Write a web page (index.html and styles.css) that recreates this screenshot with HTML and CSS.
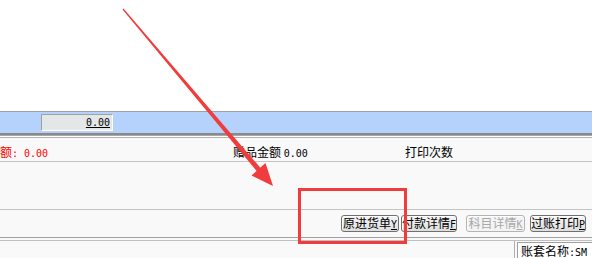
FILE: index.html
```html
<!DOCTYPE html>
<html lang="zh-CN">
<head>
  <meta charset="UTF-8" />
  <title>单据</title>
  <link rel="stylesheet" href="styles.css">
</head>
<body>
  <div class="top"></div>

  <div class="band">
    <div class="amount-box"><u>0.00</u></div>
  </div>
  <div class="sep"></div>

  <div class="info">
    <div class="info-item info-total">额<span class="num">: 0.00</span></div>
    <div class="info-item info-gift">赠品金额 <span class="num">0.00</span></div>
    <div class="info-item">打印次数</div>
  </div>

  <div class="panel"></div>

  <div class="actions">
    <button class="btn btn-orig">原进货单<u>Y</u></button>
    <button class="btn btn-pay">付款详情<u>F</u></button>
    <button class="btn btn-subj" disabled>科目详情<u>K</u></button>
    <button class="btn btn-post">过账打印<u>P</u></button>
  </div>
  <div class="actions-sep"></div>

  <div class="footer">
    <div class="footer-left"></div>
    <div class="footer-right">账套名称<span class="num">:SM</span></div>
  </div>

  <!-- annotation drawn over the window -->
  <svg class="markup" width="592" height="258" viewBox="0 0 592 258">
    <polygon points="122.5,9.5 123.5,8.5 260.9,168.4 257.1,171.6" fill="#f03c3c" />
    <polygon points="273,186 251.5,175.5 265.5,163" fill="#f03c3c" />
    <rect x="299.5" y="189.5" width="106" height="53" fill="none" stroke="#f03c3c" stroke-width="3" />
  </svg>
</body>
</html>
```

FILE: styles.css
```css
body {
  margin: 0;
  width: 592px;
  height: 258px;
  overflow: hidden;
  position: relative;
  background-color: #f9f9f9;
  font-family: "Noto Sans CJK SC", "DejaVu Sans", sans-serif;
  font-size: 12px;
  color: #000;
}

.top {
  height: 111px;
  background-color: #ffffff;
}

.band {
  height: 21px;
  border-top: 1px solid #a0a0a0;
  border-bottom: 2px solid #8a8a8a;
  background-color: #b4d2fc;
  padding-left: 41px;
}

.amount-box {
  margin-top: 2px;
  width: 72px;
  height: 17px;
  box-sizing: border-box;
  background-color: #e4e7e8;
  border-top: 1px solid #a0a0a0;
  border-left: 1px solid #a0a0a0;
  border-right: 1px solid #ffffff;
  border-bottom: 1px solid #ffffff;
  text-align: right;
  padding-right: 2px;
  line-height: 15px;
  font-family: "DejaVu Sans Mono", monospace;
  font-size: 10px;
}

.sep {
  height: 1px;
  background-color: #ffffff;
  border-top: 1px solid #a8a8a8;
  border-bottom: 1px solid #b4b4b4;
}

.info {
  display: flex;
  height: 18px;
  padding-top: 5px;
  line-height: 18px;
  border-bottom: 1px solid #c4c4c4;
  white-space: nowrap;
}

.info-item {
  flex: 0 0 auto;
}

.info-total {
  width: 233px;
  color: #ff0000;
}

.info-gift {
  width: 172px;
}

.num {
  font-family: "DejaVu Sans Mono", monospace;
  font-size: 10px;
}

.panel {
  height: 47px;
  border-bottom: 1px solid #c4c4c4;
}

.actions {
  height: 28px;
  display: flex;
  justify-content: flex-end;
  align-items: flex-start;
  padding-top: 5px;
  padding-right: 6px;
  box-sizing: border-box;
  border-bottom: 1px solid #a0a0a0;
}

.btn {
  height: 17px;
  padding: 0;
  margin: 0;
  border: 1px solid #707070;
  border-radius: 3px;
  background: linear-gradient(#f6f6f6, #dedede);
  box-shadow: inset 1px 1px 0 #ffffff;
  font-family: "Noto Sans CJK SC", sans-serif;
  font-size: 12px;
  line-height: 14px;
  color: #000;
  white-space: nowrap;
  overflow: hidden;
}

.btn u {
  font-family: "DejaVu Sans Mono", monospace;
  font-size: 10px;
}

.btn-orig { width: 58px; }
.btn-pay { width: 56px; margin-left: 2px; }
.btn-subj { width: 59px; margin-left: 9px; }
.btn-post { width: 56px; margin-left: 5px; }

.btn:disabled {
  border-color: #b4b4b4;
  color: #a8a8a8;
  background: #f4f4f4;
}

.actions-sep {
  height: 2px;
  border-bottom: 1px solid #c0c0c0;
}

.footer {
  display: flex;
  height: 17px;
}

.footer-left {
  width: 514px;
  border-right: 1px solid #b0b0b0;
}

.footer-right {
  flex: 1;
  margin-left: 2px;
  margin-top: 1px;
  border-left: 1px solid #a0a0a0;
  border-top: 1px solid #a0a0a0;
  background-color: #ffffff;
  padding-left: 3px;
  line-height: 16px;
  white-space: nowrap;
  overflow: hidden;
}

.markup {
  position: absolute;
  left: 0;
  top: 0;
  pointer-events: none;
}
```
